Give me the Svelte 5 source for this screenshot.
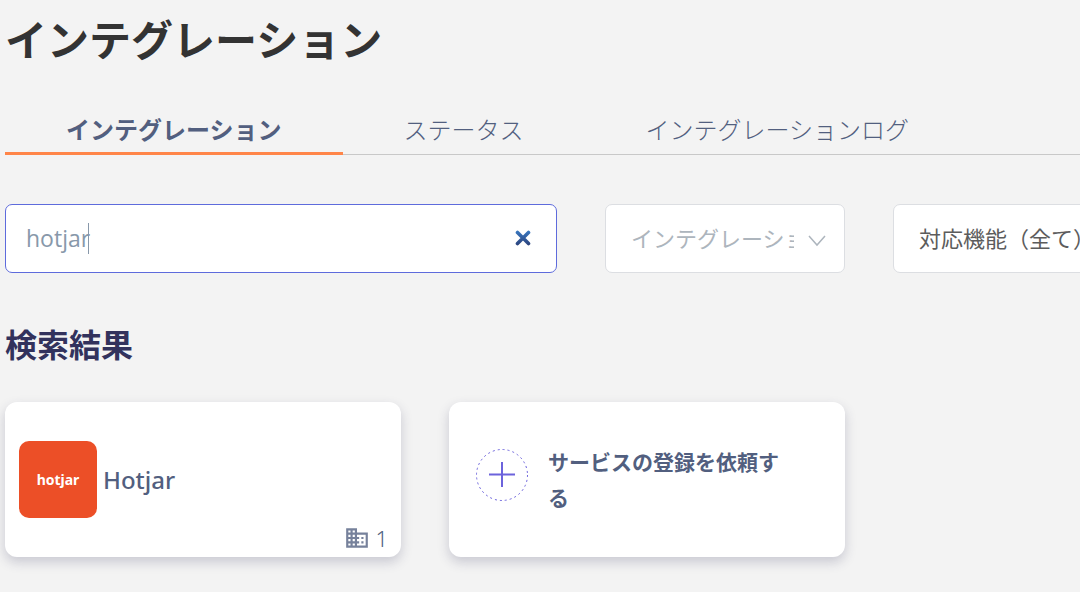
<script lang="ts">
	const tabs = ['インテグレーション', 'ステータス', 'インテグレーションログ'];

	let activeTab = $state(0);
	let query = $state('hotjar');
	let searchInput: HTMLInputElement;

	function clearQuery() {
		query = '';
		searchInput.focus();
	}
</script>

<main class="page">
	<h1>インテグレーション</h1>

	<nav class="tabs">
		{#each tabs as tab, i}
			<button class="tab" class:active={activeTab === i} onclick={() => (activeTab = i)}>{tab}</button>
		{/each}
	</nav>

	<form class="filters" onsubmit={(e) => e.preventDefault()}>
		<div class="search">
			<input type="text" aria-label="検索" bind:value={query} bind:this={searchInput} />
			{#if query === 'hotjar'}
				<span class="caret"></span>
			{/if}
			<button type="button" class="clear" aria-label="クリア" onclick={clearQuery}>
				<svg viewBox="0 0 16 16" width="16" height="16">
					<defs>
						<linearGradient id="clear-fill" x1="0" y1="0" x2="0" y2="16" gradientUnits="userSpaceOnUse">
							<stop offset="0" stop-color="#3a7bc4" />
							<stop offset="1" stop-color="#2a3f78" />
						</linearGradient>
					</defs>
					<path
						d="M2.5 2.5L13.5 13.5M13.5 2.5L2.5 13.5"
						stroke="url(#clear-fill)"
						stroke-width="3.6"
						stroke-linecap="round"
					/>
				</svg>
			</button>
		</div>

		<div class="select muted">
			<select aria-label="インテグレーション">
				<option>インテグレーション</option>
			</select>
			<svg class="chevron" viewBox="0 0 18 12" width="18" height="12">
				<path d="M1 1L9 10L17 1" fill="none" stroke="currentColor" stroke-width="1.5" />
			</svg>
		</div>

		<div class="select">
			<select aria-label="対応機能">
				<option>対応機能（全て）</option>
			</select>
			<svg class="chevron" viewBox="0 0 18 12" width="18" height="12">
				<path d="M1 1L9 10L17 1" fill="none" stroke="currentColor" stroke-width="1.5" />
			</svg>
		</div>
	</form>

	<h2>検索結果</h2>

	<div class="cards">
		<article class="card service">
			<div class="logo">hotjar</div>
			<h3>Hotjar</h3>
			<div class="count">
				<svg viewBox="0 0 24 24" width="26" height="26" fill="currentColor">
					<path
						d="M12 7V3H2v18h20V7H12zM6 19H4v-2h2v2zm0-4H4v-2h2v2zm0-4H4V9h2v2zm0-4H4V5h2v2zm4 12H8v-2h2v2zm0-4H8v-2h2v2zm0-4H8V9h2v2zm0-4H8V5h2v2zm10 12h-8v-2h2v-2h-2v-2h2v-2h-2V9h8v10zm-2-8h-2v2h2v-2zm0 4h-2v2h2v-2z"
					/>
				</svg>
				<span>1</span>
			</div>
		</article>

		<button class="card request">
			<svg class="plus" viewBox="0 0 52 52" width="52" height="52" fill="none" stroke="#6c63dc">
				<circle cx="26" cy="26" r="25.5" stroke-dasharray="2 3" />
				<path d="M26 13V38M13 25.5H39" stroke-width="2" />
			</svg>
			<span>サービスの登録を依頼する</span>
		</button>
	</div>
</main>

<style>
	:global(body) {
		margin: 0;
		background: #f3f3f3;
		font-family: 'Noto Sans', 'Noto Sans CJK JP', sans-serif;
	}

	.page {
		padding: 8px 0 32px 5px;
		overflow: hidden;
		color: #525f7f;
	}

	h1 {
		margin: 0;
		font-size: 42px;
		line-height: 64px;
		font-weight: 700;
		color: #333;
	}

	.tabs {
		display: flex;
		margin-top: 32px;
		border-bottom: 1px solid #c8c8c8;
	}

	.tab {
		flex: none;
		margin-bottom: -1px;
		padding: 10px 61px 6px;
		border: none;
		border-bottom: 3px solid transparent;
		background: none;
		color: inherit;
		font-family: inherit;
		font-size: 24px;
		line-height: 32px;
		font-weight: 300;
		cursor: pointer;
	}

	.tab.active {
		border-bottom-color: #ff8548;
		font-weight: 700;
	}

	.filters {
		display: flex;
		gap: 48px;
		margin-top: 49px;
	}

	.search,
	.select {
		position: relative;
		flex: none;
		box-sizing: border-box;
		height: 69px;
		border: 1px solid #dcdee2;
		border-radius: 7px;
		background: #fff;
	}

	.search {
		display: flex;
		align-items: center;
		width: 552px;
		padding: 0 25px 2px 20px;
		border-color: #5e6bdc;
	}

	.search input {
		flex: 1;
		min-width: 0;
		padding: 0;
		border: none;
		outline: none;
		background: none;
		color: #8898aa;
		font-family: 'Open Sans', 'Noto Sans CJK JP', sans-serif;
		font-size: 23px;
		line-height: 32px;
		font-weight: 400;
	}

	.caret {
		position: absolute;
		top: 18px;
		left: 82px;
		width: 1px;
		height: 31px;
		background: #8898aa;
	}

	.clear {
		display: flex;
		padding: 0;
		border: none;
		background: none;
		cursor: pointer;
	}

	.select {
		width: 240px;
		color: #5c5c5c;
	}

	.select select {
		width: 100%;
		height: 100%;
		padding: 0 50px 2px 25px;
		border: none;
		outline: none;
		appearance: none;
		background: none;
		color: inherit;
		font-family: inherit;
		font-size: 22px;
		line-height: 32px;
	}

	.muted {
		color: #adb5bd;
	}

	.chevron {
		position: absolute;
		top: 30px;
		right: 18px;
		pointer-events: none;
	}

	h2 {
		margin: 48px 0 33px;
		font-size: 32px;
		line-height: 48px;
		font-weight: 700;
		color: #32325d;
	}

	.cards {
		display: flex;
		gap: 48px;
	}

	.card {
		position: relative;
		display: flex;
		align-items: center;
		flex: none;
		box-sizing: border-box;
		width: 396px;
		min-height: 155px;
		border: none;
		border-radius: 12px;
		background: #fff;
		box-shadow: 0 5px 12px rgba(50, 50, 93, 0.22);
	}

	.service {
		gap: 6px;
		padding: 0 14px;
	}

	.logo {
		width: 78px;
		border-radius: 10px;
		background: #ec4f27;
		color: #fff;
		font-size: 14px;
		line-height: 77px;
		font-weight: 700;
		text-align: center;
	}

	h3 {
		margin: 0;
		font-size: 24px;
		line-height: 32px;
		font-weight: 500;
	}

	.count {
		position: absolute;
		right: 13px;
		bottom: 5px;
		display: flex;
		align-items: center;
		gap: 5px;
		font-size: 22px;
		line-height: 28px;
		font-weight: 300;
	}

	.count svg {
		color: #76819b;
	}

	.request {
		gap: 20px;
		padding: 0 64px 0 27px;
		color: inherit;
		font-family: inherit;
		font-size: 21px;
		line-height: 36px;
		font-weight: 700;
		text-align: left;
		cursor: pointer;
	}

	.plus {
		flex: none;
		margin-bottom: 10px;
	}
</style>
